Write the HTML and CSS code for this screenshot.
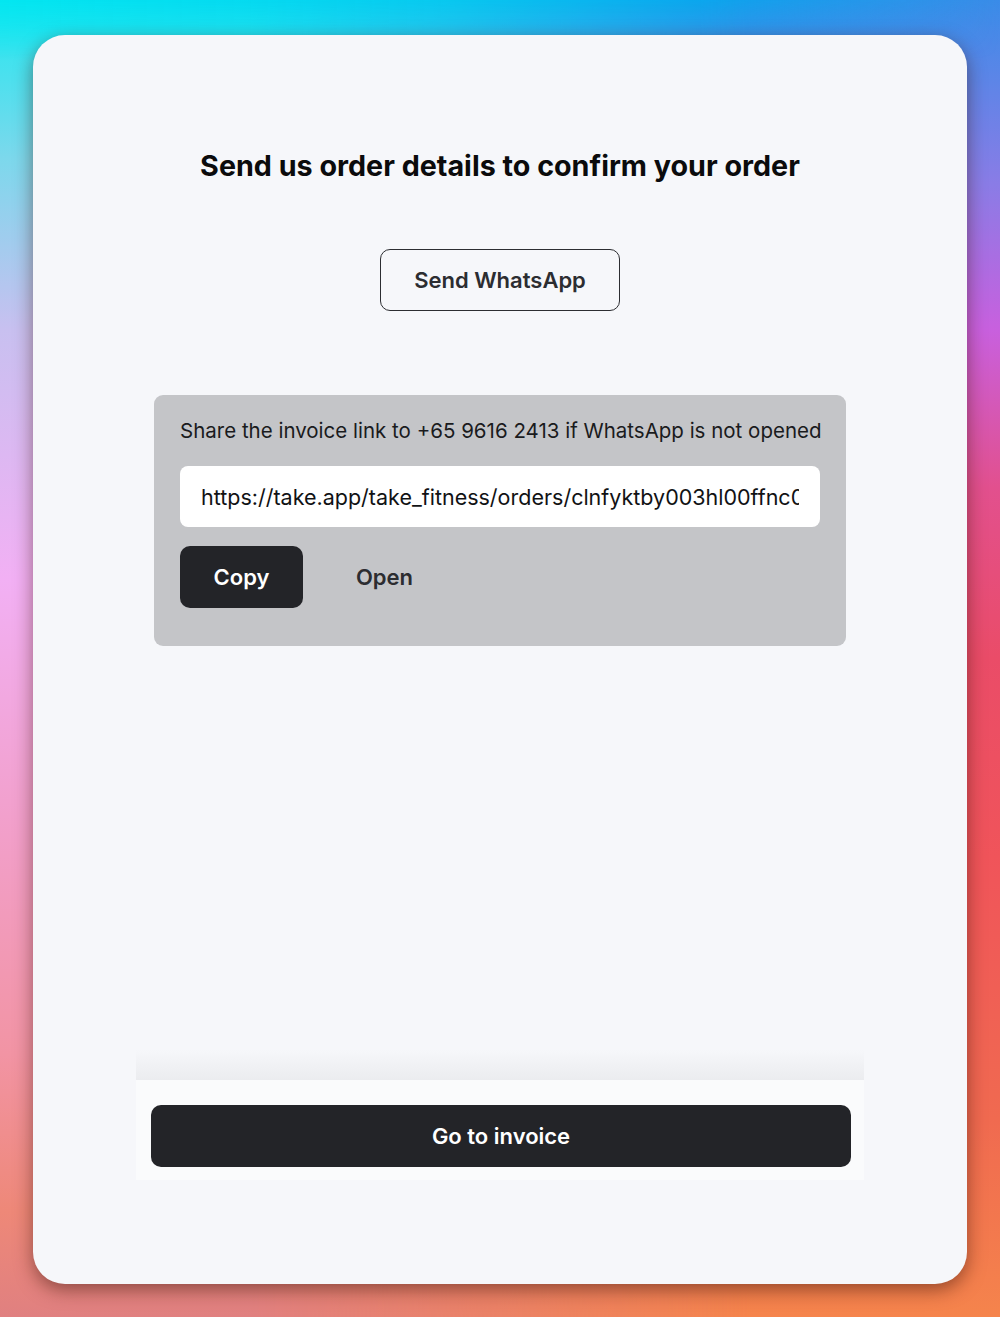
FILE: index.html
```html
<!doctype html>
<html lang="en">
<head>
  <meta charset="utf-8">
  <title>Confirm your order</title>
  <link rel="stylesheet" href="styles.css">
</head>
<body>

<div class="card">
  <h1 class="title">Send us order details to confirm your order</h1>

  <button class="btn-outline">Send WhatsApp</button>

  <div class="share">
    <p class="share-text">Share the invoice link to +65 9616 2413 if WhatsApp is not opened</p>
    <input class="share-link" type="text" readonly value="https://take.app/take_fitness/orders/clnfyktby003hl00ffnc0a8x2">
    <div class="share-actions">
      <button class="btn-dark">Copy</button>
      <button class="btn-plain">Open</button>
    </div>
  </div>

  <div class="footer">
    <div class="footer-fade"></div>
    <div class="footer-bar">
      <button class="btn-dark btn-wide">Go to invoice</button>
    </div>
  </div>
</div>

</body>
</html>
```

FILE: styles.css
```css
html, body { margin: 0; height: 1317px; }

body {
  position: relative;
  font-family: Inter, "Noto Sans", "Liberation Sans", sans-serif;
  background: linear-gradient(180deg, #3a8ce8 0%, #8a7ce6 14%, #c860de 25%, #e2508e 37%, #ea4c68 50%, #f0545a 65%, #f06a50 85%, #f5844c 100%);
  overflow: hidden;
}
body::before {
  content: "";
  position: absolute;
  inset: 0;
  background: linear-gradient(180deg, #1ee8f0 0%, #7cd8ec 12%, #c8c0f0 25%, #f2b0f4 44%, #f2a0cc 62%, #f294a4 80%, #ee8878 92%, #e08080 100%);
  -webkit-mask-image: linear-gradient(90deg, #000 0%, #000 25%, transparent 75%);
  mask-image: linear-gradient(90deg, #000 0%, #000 25%, transparent 75%);
}
body::after {
  content: "";
  position: absolute;
  left: 0; right: 0; top: 0;
  height: 60px;
  background: linear-gradient(90deg, rgba(0,230,240,.9) 0%, rgba(0,200,240,.8) 45%, rgba(0,170,238,.8) 70%, rgba(40,140,230,0) 100%);
  -webkit-mask-image: linear-gradient(180deg, #000 0%, transparent 100%);
  mask-image: linear-gradient(180deg, #000 0%, transparent 100%);
}

.card {
  position: relative;
  z-index: 1;
  box-sizing: border-box;
  margin: 35px 33px 0;
  height: 1249px;
  padding: 113px 0 104px;
  background: #f6f7fa;
  border-radius: 32px;
  box-shadow: 0 6px 18px rgba(60, 20, 10, .5);
  display: flex;
  flex-direction: column;
  align-items: center;
}

.title {
  margin: 0;
  font-size: 28.7px;
  line-height: 36px;
  font-weight: 700;
  color: #0b0b0c;
}

button { font-family: inherit; cursor: pointer; }

.btn-outline {
  margin-top: 65px;
  width: 240px;
  height: 62px;
  background: transparent;
  border: 1.5px solid #2c2d31;
  border-radius: 10px;
  font-size: 22px;
  font-weight: 600;
  color: #2c2d31;
}

.share {
  margin-top: 84px;
  width: 692px;
  box-sizing: border-box;
  padding: 24px 26px 38px 26px;
  background: #c4c5c8;
  border-radius: 9px;
}
.share-text {
  margin: 0;
  font-size: 20.5px;
  line-height: 24px;
  color: #1a1b1d;
  white-space: nowrap;
}
.share-link {
  display: block;
  margin-top: 23px;
  width: 100%;
  height: 61px;
  box-sizing: border-box;
  padding: 0 21px;
  border: 0;
  border-radius: 8px;
  background: #fff;
  font-family: inherit;
  font-size: 21.5px;
  color: #111214;
  outline: none;
}
.share-actions {
  margin-top: 19px;
  display: flex;
  gap: 20px;
}

.btn-dark {
  width: 123px;
  height: 62px;
  border: 0;
  border-radius: 10px;
  background: #232428;
  color: #fff;
  font-size: 22px;
  font-weight: 600;
}
.btn-plain {
  width: 123px;
  height: 62px;
  border: 0;
  background: transparent;
  color: #2c2d31;
  font-size: 22px;
  font-weight: 600;
}

.footer {
  margin-top: auto;
  width: 728px;
}
.footer-fade {
  height: 30px;
  background: linear-gradient(180deg, rgba(236,237,240,0) 0%, #ebecef 100%);
}
.footer-bar {
  background: #fafbfc;
  padding: 25px 13px 13px 15px;
}
.btn-wide { width: 100%; }
```
